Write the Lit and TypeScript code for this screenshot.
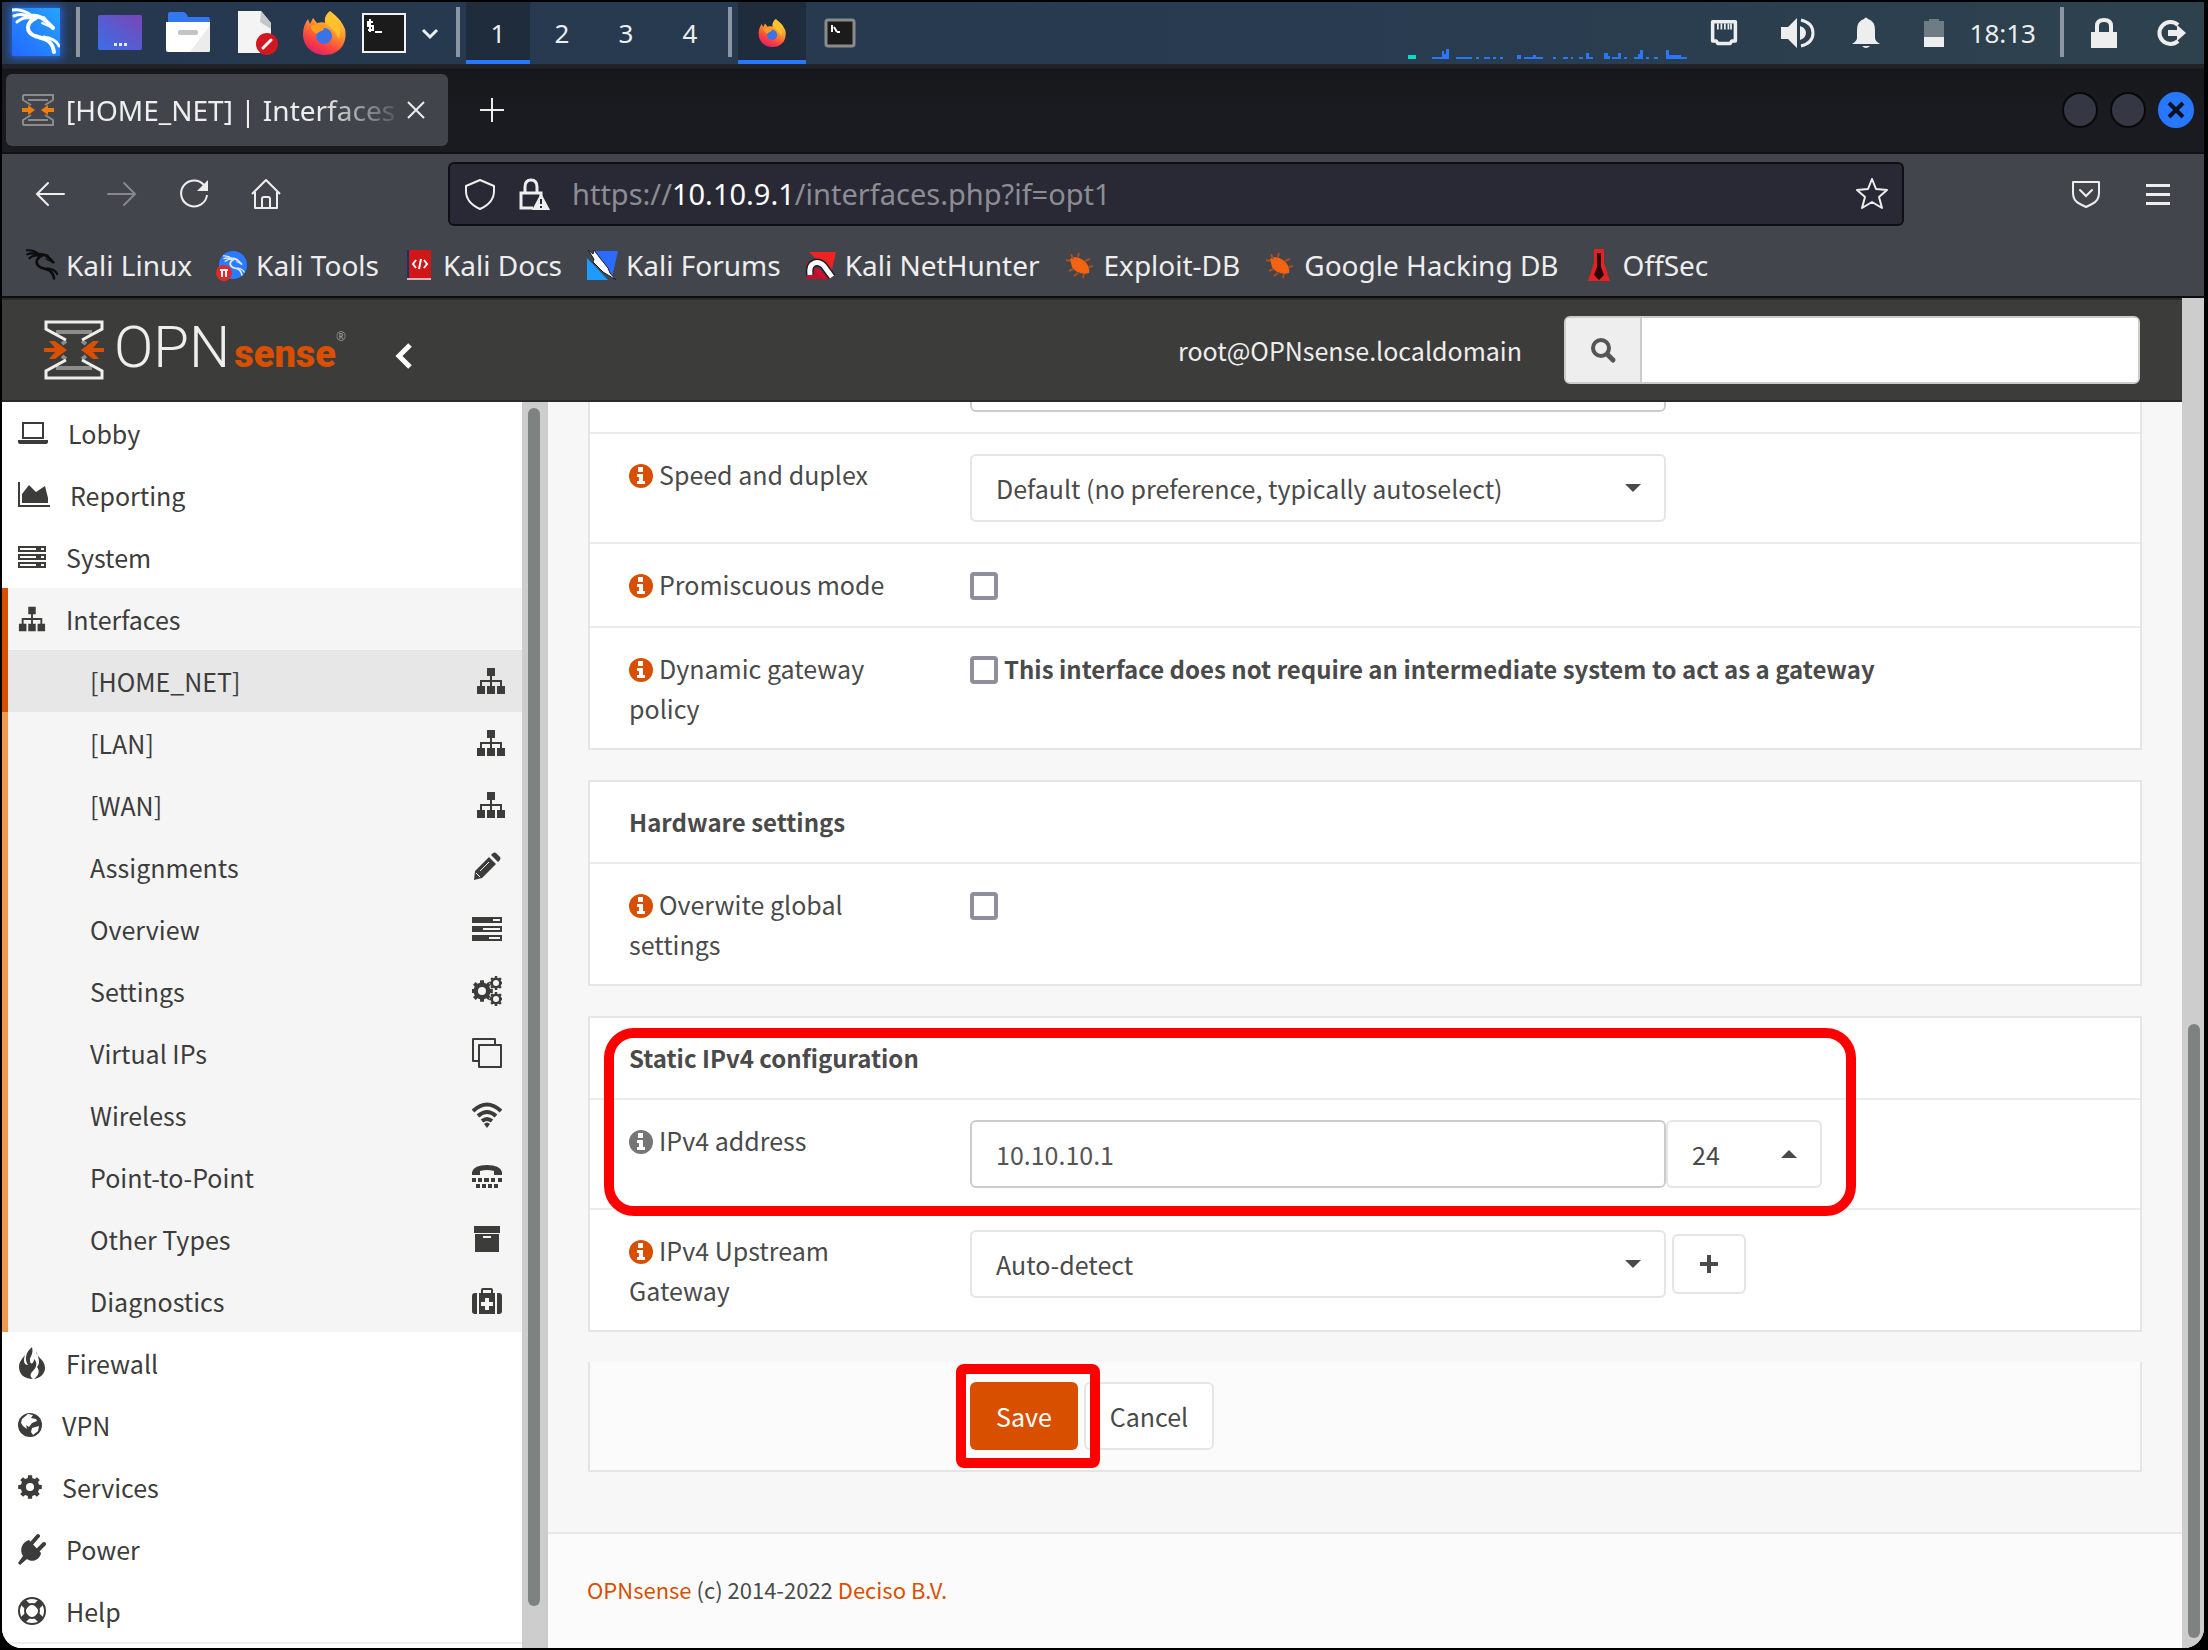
import { LitElement, html, svg, css, TemplateResult } from "lit";
import { customElement } from "lit/decorators.js";

/* ---------- icon drawings ---------- */

const gearPath = (cx: number, cy: number, r: number, hole: number, teeth = 8): string => {
  const pts: string[] = [];
  const step = (Math.PI * 2) / teeth;
  for (let i = 0; i < teeth; i++) {
    const a = i * step - Math.PI / 2;
    const spots: [number, number][] = [
      [a - step * 0.3, r * 0.78],
      [a - step * 0.22, r],
      [a + step * 0.22, r],
      [a + step * 0.3, r * 0.78],
    ];
    for (const [t, d] of spots) {
      pts.push(`${(cx + Math.cos(t) * d).toFixed(1)} ${(cy + Math.sin(t) * d).toFixed(1)}`);
    }
  }
  return `M${pts.join("L")}Z M${cx - hole} ${cy}a${hole} ${hole} 0 1 0 ${hole * 2} 0a${hole} ${hole} 0 1 0 ${-hole * 2} 0Z`;
};

const dragon = svg`
  <g fill="none" stroke="currentColor" stroke-linecap="round">
    <path stroke-width="3" d="M1 2C9 1 15 4 20 8M2 8C9 5 14 7 18 10M5 14C9 10 13 9 19 10"/>
    <path stroke-width="4" d="M18 8C28 6 33 12 41 20"/>
    <path stroke-width="2" d="M30 15L41 20M32 9L36 14"/>
    <path stroke-width="4" d="M24 10C13 15 14 24 23 28C32 31 40 31 42 44"/>
    <path stroke-width="3" d="M32 29C39 30 45 33 47 38"/>
  </g>`;

const firefox = svg`
  <defs>
    <linearGradient id="ff" x1="0.8" y1="0" x2="0.3" y2="1">
      <stop offset="0" stop-color="#ffe14a"/><stop offset="0.4" stop-color="#ff9a2e"/>
      <stop offset="0.75" stop-color="#ff4040"/><stop offset="1" stop-color="#d9206c"/>
    </linearGradient>
  </defs>
  <path fill="url(#ff)" d="M28 0C34 5 38 8 41 14L43 18C46 34 36 44 23 44C10 44 1 35 1 23C1 17 3 12 6 8L8 13L11 7L15 12C19 11 21 11 23 12C22 7 24 3 28 0Z"/>
  <path fill="#ffc12e" d="M28 1C36 9 40 15 37 28C33 20 29 16 24 13C22 8 24 4 28 1Z"/>
  <circle cx="22" cy="25" r="8" fill="#3a72e8"/>
  <path fill="#ff9d22" d="M9 15C14 13 18 14 22 18C20 21 16 20 15 23C12 22 9 19 9 15Z"/>`;

const sitemap = svg`
  <path fill="currentColor" d="M11 2h8v8h-8zM1 20h8v8h-8zM11 20h8v8h-8zM21 20h8v8h-8z"/>
  <path fill="none" stroke="currentColor" stroke-width="2" d="M15 9v12M5 21v-6h20v6"/>`;

const icons: Record<string, { box: string; art: TemplateResult | unknown }> = {
  dragon: { box: "0 0 48 48", art: dragon },
  firefox: { box: "0 0 44 44", art: firefox },
  desktop: {
    box: "0 0 44 44",
    art: svg`<defs><linearGradient id="dk" x1="0" x2="1" y1="1" y2="0"><stop offset="0" stop-color="#3a6fe8"/><stop offset="1" stop-color="#7a45b4"/></linearGradient></defs>
      <rect y="4" width="44" height="35" rx="2" fill="url(#dk)"/><path fill="#e8ecff" d="M16 32h3v3h-3zM21 32h3v3h-3zM26 32h3v3h-3z"/>`,
  },
  folder: {
    box: "0 0 44 44",
    art: svg`<path fill="#3577ee" d="M2 3q0-2 2-2h13q3 0 5 5h20q2 0 2 2v8H2z"/><path fill="#fff" d="M0 11h44v28q0 2-2 2H2q-2 0-2-2z"/>
      <path fill="#ececec" d="M44 14v25q0 2-2 2H24z"/><rect x="12" y="19" width="20" height="5" rx="2" fill="#c4c4c4"/>`,
  },
  file: {
    box: "0 0 44 44",
    art: svg`<path fill="#f4f4f4" d="M4 0h23l10 12v30H4z"/><path fill="#c6c6c6" d="M27 0l10 12v6L26 11z"/>
      <circle cx="33" cy="33" r="11" fill="#d11820"/><path stroke="#fff" stroke-width="3" stroke-linecap="round" d="M29 37l8-8"/>`,
  },
  terminal: {
    box: "0 0 44 44",
    art: svg`<rect x="1" y="3" width="42" height="38" fill="#1b1b1b" stroke="#f2f2f2" stroke-width="2"/>
      <path fill="none" stroke="#fff" stroke-width="2" d="M11 11H6v4h5v4H6M8 8v13M13 21h7"/>`,
  },
  terminalSmall: {
    box: "0 0 32 32",
    art: svg`<rect x="2" y="3" width="28" height="26" rx="2" fill="#1b1b1b" stroke="#8b8b8b" stroke-width="3"/>
      <path fill="none" stroke="#fff" stroke-width="2" d="M8 8v7M10 10l3 5M13 15h3"/>`,
  },
  chevronDown: { box: "0 0 20 20", art: svg`<path fill="none" stroke="#eee" stroke-width="3" d="M3 7l7 7 7-7"/>` },
  ethernet: {
    box: "0 0 32 32",
    art: svg`<path fill="none" stroke="#eee" stroke-width="4" stroke-linejoin="round" d="M3 3h26v22h-4l-2 3H9l-2-3H3z"/>
      <path stroke="#eee" stroke-width="2" d="M9 5v7M13 5v7M17 5v7M21 5v7M24 5v7"/>`,
  },
  speaker: {
    box: "0 0 36 32",
    art: svg`<path fill="#eee" d="M1 10h7l9-9v30l-9-9H1z"/><path fill="#eee" d="M20 9q6 2 6 7t-6 7z"/>
      <path fill="none" stroke="#eee" stroke-width="3" d="M21 3q12 3 12 13t-12 13"/>`,
  },
  bell: {
    box: "0 0 32 32",
    art: svg`<path fill="#eee" d="M14 2q2-3 4 0q7 2 7 11v8q0 3 5 6H2q5-3 5-6v-8q0-9 7-11zM12 29h8q-4 4-8 0z"/>`,
  },
  battery: { box: "0 0 20 32", art: svg`<path fill="#6f7c84" d="M5 2h10v2h5v16H0V4h5z"/><path fill="#eee" d="M0 20h20v10H0z"/>` },
  lockSolid: {
    box: "0 0 32 32",
    art: svg`<path fill="#eee" d="M3 15h26v16H3z"/><path fill="none" stroke="#eee" stroke-width="4" d="M9 16V9q0-6 7-6t7 6v7"/>`,
  },
  logout: {
    box: "0 0 32 32",
    art: svg`<path fill="none" stroke="#eee" stroke-width="4" d="M24 8a11 11 0 1 0 0 16"/><path fill="#eee" d="M14 13h9V8l9 8-9 8v-5h-9z"/>`,
  },
  back: { box: "0 0 32 32", art: svg`<path fill="none" stroke="currentColor" stroke-width="2" stroke-linecap="round" d="M30 16H3M14 5L3 16l11 11"/>` },
  forward: { box: "0 0 32 32", art: svg`<path fill="none" stroke="currentColor" stroke-width="2" stroke-linecap="round" d="M2 16h27M18 5l11 11-11 11"/>` },
  reload: {
    box: "0 0 32 32",
    art: svg`<path fill="none" stroke="currentColor" stroke-width="2" d="M26 7a13 13 0 1 0 3 10"/><path fill="currentColor" d="M30 2v11H19z"/>`,
  },
  home: {
    box: "0 0 32 32",
    art: svg`<path fill="none" stroke="currentColor" stroke-width="2" stroke-linejoin="round" d="M2 16L16 2l14 14M5 14v16h22V14M12 30v-9q0-2 2-2h4q2 0 2 2v9"/>`,
  },
  shield: {
    box: "0 0 32 32",
    art: svg`<path fill="none" stroke="currentColor" stroke-width="2" stroke-linejoin="round" d="M16 2l14 6v5c0 9-5 14-14 18C7 27 2 22 2 13V8z"/>`,
  },
  lockWarn: {
    box: "0 0 32 32",
    art: svg`<path fill="none" stroke="currentColor" stroke-width="3" d="M15 30H3V15h20v4M7 15V9q0-7 6-7t6 7v6"/>
      <path fill="currentColor" d="M23 15l9 17H14z"/><path stroke="#282934" stroke-width="2" d="M23 21v5M23 28v2"/>`,
  },
  star: {
    box: "0 0 32 32",
    art: svg`<path fill="none" stroke="currentColor" stroke-width="2" stroke-linejoin="round" d="M16 1l4 10 11 1-8 7 3 11-10-6-10 6 3-11-8-7 11-1z"/>`,
  },
  pocket: {
    box: "0 0 32 32",
    art: svg`<path fill="none" stroke="currentColor" stroke-width="2" stroke-linejoin="round" d="M3 4h26v11q0 8-7 11l-6 3-6-3q-7-3-7-11z"/>
      <path fill="none" stroke="currentColor" stroke-width="2" stroke-linecap="round" d="M10 12l6 6 6-6"/>`,
  },
  menu: { box: "0 0 32 32", art: svg`<path fill="currentColor" d="M4 6h24v3H4zM4 15h24v3H4zM4 24h24v3H4z"/>` },
  close: { box: "0 0 20 20", art: svg`<path fill="none" stroke="currentColor" stroke-width="2" d="M2 2l16 16M18 2L2 18"/>` },
  closeBold: { box: "0 0 20 20", art: svg`<path fill="none" stroke="#0b1020" stroke-width="4" d="M3 3l14 14M17 3L3 17"/>` },
  plusThin: { box: "0 0 28 28", art: svg`<path fill="none" stroke="currentColor" stroke-width="2" d="M14 2v24M2 14h24"/>` },
  hourglassTab: {
    box: "0 0 32 32",
    art: svg`<path fill="none" stroke="#8b8b8b" stroke-width="2" d="M1 1h30v5l-8 5M1 1v5l8 5M1 31h30v-5l-8-5M1 31v-5l8-5M6 6h20M6 26h20"/>
      <path fill="#f27c0c" d="M0 14h6v-3l7 5-7 5v-3H0zM32 14h-6v-3l-7 5 7 5v-3h6z"/>`,
  },
  hourglass: {
    box: "0 0 60 60",
    art: svg`<path fill="none" stroke="#8c8c8b" stroke-width="4" d="M12 12h36M12 48h36M22 21l-4 3M38 21l4 3M22 39l-4-3M38 39l4-3"/>
      <path fill="none" stroke="#eee" stroke-width="3" d="M22 20L2 9V2h56v7L38 20M22 40L2 51v7h56v-7L38 40"/>
      <path fill="#d94f00" d="M0 28h11l-6-7h6l12 9-12 9H5l6-7H0zM60 28H49l6-7h-6l-12 9 12 9h6l-6-7h11z"/>`,
  },
  tools: {
    box: "0 0 32 32",
    art: svg`<circle cx="17" cy="16" r="14" fill="#2b7bff"/><g color="#d7e8ff" transform="translate(7 6) scale(.45)">${dragon}</g>
      <circle cx="8" cy="24" r="8" fill="#e02a2a"/><path fill="none" stroke="#fff" stroke-width="2" d="M4 21h8M6 21v7M10 21v7"/>`,
  },
  docs: {
    box: "0 0 32 32",
    art: svg`<path fill="#17306b" d="M4 1h4v28H4z"/><path fill="#d01616" d="M6 1h22v28H6z"/><path fill="#d9b4b4" d="M4 29h24v2H4z"/>
      <path fill="none" stroke="#fff" stroke-width="2" d="M13 11l-3 4 3 4M21 11l3 4-3 4M18 10l-2 10"/>`,
  },
  forums: {
    box: "0 0 32 32",
    art: svg`<path fill="#1d9bff" d="M1 9l21 22H1z"/><path fill="#2b6bff" d="M9 2h23l-6 26z"/>
      <path fill="#fff" stroke="#16202e" stroke-width="1" d="M2 1l5 4 1-4 6 8 8 10 2 5 6 7-13-8L7 13l1-3z"/>`,
  },
  nethunter: {
    box: "0 0 32 32",
    art: svg`<path fill="#e22" d="M4 3h27l-5 22z"/><path fill="#c01030" d="M1 12v18h26z"/>
      <path fill="none" stroke="#16202e" stroke-width="8" d="M5 26C3 12 14 11 19 17L27 28"/>
      <path fill="none" stroke="#fff" stroke-width="5" d="M5 26C3 12 14 11 19 17L27 28"/><path stroke="#d01030" stroke-width="4" d="M12 20l8 10"/>`,
  },
  bug: {
    box: "0 0 32 32",
    art: svg`<path fill="#f26411" d="M6 10C10 7 15 8 19 11C24 15 26 19 25 24C18 26 11 23 8 18z"/>
      <path fill="none" stroke="#a8511c" stroke-width="2" d="M9 10L7 5M14 8l1-4M21 12l5-2M25 18l4-1M9 20l-4 2M14 24l-4 3M20 25l-1 4M6 12l-4-1"/>`,
  },
  offsec: {
    box: "0 0 32 32",
    art: svg`<path fill="#e52222" d="M11 0h10v14l6 18H5l6-18z"/><path fill="#2a0508" d="M14 4h4v14l3 8-5 5-5-5 3-8z"/>`,
  },
  chevronLeft: { box: "0 0 24 28", art: svg`<path fill="none" stroke="#fff" stroke-width="5" d="M18 3L7 14l11 11"/>` },
  search: {
    box: "0 0 28 28",
    art: svg`<circle cx="12" cy="12" r="8" fill="none" stroke="currentColor" stroke-width="4"/><path stroke="currentColor" stroke-width="5" stroke-linecap="round" d="M19 19l5 5"/>`,
  },
  info: {
    box: "0 0 24 24",
    art: svg`<circle cx="12" cy="12" r="12" fill="currentColor"/><path fill="#fff" d="M9 3h5v5H9zM8 10h6v7h2v3H8v-3h2v-4H8z"/>`,
  },
  caretDown: { box: "0 0 18 10", art: svg`<path fill="currentColor" d="M1 1h16L9 9z"/>` },
  caretUp: { box: "0 0 18 10", art: svg`<path fill="currentColor" d="M1 9h16L9 1z"/>` },
  plusBold: { box: "0 0 20 20", art: svg`<path fill="currentColor" d="M8 1h4v7h7v4h-7v7H8v-7H1V8h7z"/>` },
  laptop: {
    box: "0 0 30 28",
    art: svg`<path fill="none" stroke="currentColor" stroke-width="2" d="M5 4h20v15H5z"/><path fill="currentColor" d="M0 21h30v2q0 2-3 2H3q-3 0-3-2z"/>`,
  },
  chart: {
    box: "0 0 32 28",
    art: svg`<path fill="currentColor" d="M0 1h2v23h30v2H0zM4 13l7-9 7 7 3-2 6-4 3 12v5H4z"/>`,
  },
  server: {
    box: "0 0 28 28",
    art: svg`<path fill="currentColor" fill-rule="evenodd" d="M0 3h28v6H0zM2 5v2h16V5zM23 5v2h3V5zM0 11h28v6H0zM2 13v2h16v-2zM23 13v2h3v-2zM0 19h28v6H0zM2 21v2h16v-2zM23 21v2h3v-2z"/>`,
  },
  sitemap: { box: "0 0 30 30", art: sitemap },
  fire: {
    box: "0 0 28 32",
    art: svg`<path fill="currentColor" d="M14 0C16 8 11 10 12 14C12 18 16 17 16 12C21 17 17 22 14 25C12 27 12 30 15 32C6 32 1 27 1 20C1 15 4 12 7 8C5 14 6 18 10 18C6 12 8 5 14 0Z"/>
      <path fill="currentColor" d="M18 4C18 10 27 12 27 21C27 27 22 31 16 32C21 28 22 24 19 20C23 16 20 9 18 4Z"/>`,
  },
  globe: {
    box: "0 0 24 28",
    art: svg`<circle cx="12" cy="14" r="12" fill="currentColor"/>
      <path fill="#fff" d="M4 8L10 3L15 4L13 7L18 8L19 10L14 12L11 16L8 14L9 18L5 15L3 12ZM14 17L21 15L20 20L15 24L13 21Z"/>`,
  },
  cog: { box: "0 0 24 28", art: svg`<path fill="currentColor" fill-rule="evenodd" d="${gearPath(12, 14, 12, 4)}"/>` },
  cogs: {
    box: "0 0 30 30",
    art: svg`<path fill="currentColor" fill-rule="evenodd" d="${gearPath(10, 15, 11, 4)}${gearPath(24, 7, 7, 3)}${gearPath(24, 23, 7, 3)}"/>`,
  },
  plug: {
    box: "0 0 28 32",
    art: svg`<path fill="currentColor" d="M11 7L23 20C22 27 14 30 9 26L2 32L0 30L5 23C1 17 4 9 11 7Z"/>
      <path stroke="currentColor" stroke-width="4" stroke-linecap="round" d="M13 11l7-8M19 18l7-7"/>`,
  },
  ring: {
    box: "0 0 28 32",
    art: svg`<circle cx="14" cy="16" r="13" fill="none" stroke="currentColor" stroke-width="2"/><circle cx="14" cy="16" r="7" fill="none" stroke="currentColor" stroke-width="2"/>
      <path stroke="currentColor" stroke-width="7" d="M5 7l5 5M23 7l-5 5M5 25l5-5M23 25l-5-5"/>`,
  },
  pencil: {
    box: "0 0 30 30",
    art: svg`<path fill="currentColor" d="M3 19L17 5l7 7L10 26l-8 2zM19 3l2-2q2-1 3 0l4 4q1 1 0 3l-2 2z"/><path stroke="#f5f5f5" stroke-width="1" d="M8 19L17 10M4 21l4 4"/>`,
  },
  overview: {
    box: "0 0 30 30",
    art: svg`<path fill="currentColor" fill-rule="evenodd" d="M0 3h30v6H0zM21 5v2h7V5zM0 12h30v6H0zM11 14v2h17v-2zM0 21h30v6H0zM17 23v2h11v-2z"/>`,
  },
  copy: {
    box: "0 0 30 30",
    art: svg`<path fill="none" stroke="currentColor" stroke-width="2" stroke-linejoin="round" d="M7 7h22v22H7zM6 23H1V1h22v5"/>`,
  },
  wifi: {
    box: "0 0 30 30",
    art: svg`<path fill="none" stroke="currentColor" stroke-width="4" d="M1 11Q15-2 29 11M6 16q9-8 18 0M10 21q5-4 10 0"/><path fill="currentColor" d="M12 24q3-3 6 0l-3 4z"/>`,
  },
  tty: {
    box: "0 0 30 30",
    art: svg`<path fill="currentColor" d="M0 10Q2 3 15 3T30 10v3h-8V9Q15 7 8 9v4H0zM0 16h4v4H0zM6 16h4v4H6zM12 16h5v4h-5zM19 16h4v4h-4zM26 16h4v4h-4zM4 22h4v4H4zM10 22h4v4h-4zM16 22h4v4h-4zM22 22h4v4h-4z"/>`,
  },
  archive: {
    box: "0 0 30 30",
    art: svg`<path fill="currentColor" fill-rule="evenodd" d="M2 2h26v7H2zM3 10h24v18H3zM11 12v2h8v-2z"/>`,
  },
  medkit: {
    box: "0 0 30 30",
    art: svg`<path fill="currentColor" fill-rule="evenodd" d="M9 7V4q0-2 2-2h8q2 0 2 2v3h2v21H7V7zM11 7h8V4h-8zM13 12v4H9v4h4v4h4v-4h4v-4h-4v-4zM5 7v21H3q-3 0-3-3V10q0-3 3-3zM25 7v21h2q3 0 3-3V10q0-3-3-3z"/>`,
  },
};

const icon = (name: string, cls: string) =>
  html`<svg class="icon ${cls}" viewBox=${icons[name].box} aria-hidden="true">${icons[name].art}</svg>`;

const iconStyles = css`
  .icon { display: block; flex: none; }
  .s18 { width: 18px; height: 10px; }
  .s20 { width: 20px; height: 20px; }
  .s24 { width: 24px; height: 28px; }
  .s28 { width: 28px; height: 28px; }
  .tall { width: 28px; height: 32px; }
  .s30 { width: 30px; height: 30px; }
  .s32 { width: 32px; height: 32px; }
  .s44 { width: 44px; height: 44px; }
  .s48 { width: 48px; height: 48px; }
  .s60 { width: 60px; height: 60px; }
  .narrow { width: 20px; height: 32px; }
  .wide { width: 36px; height: 32px; }
  button { font: inherit; color: inherit; background: none; border: 0; padding: 0; margin: 0; display: grid; place-items: center; }
  a { color: inherit; text-decoration: none; }
  * { box-sizing: border-box; }
`;

/* ---------- desktop panel ---------- */

@customElement("desktop-panel")
export class DesktopPanel extends LitElement {
  static styles = [iconStyles, css`
    :host { display: flex; align-items: center; height: 62px; padding: 0 18px 0 10px; color: #eee;
      font: 26px/36px "Noto Sans", sans-serif; background: linear-gradient(90deg, #25384f, #283b50 60%, #2e424e); }
    .kali { width: 48px; height: 48px; color: #fff; background: linear-gradient(45deg, #2468ff, #24a4ff); box-shadow: 0 0 8px 2px #2a62d8; margin-bottom: 2px; }
    .sep { width: 4px; height: 50px; background: #8c96a2; margin: 0 0 2px 16px; }
    .spaces + .sep { margin-left: 6px; }
    .launchers { display: flex; align-items: center; gap: 24px; padding-left: 18px; }
    .launchers .term { margin-left: -8px; }
    .launchers .more { margin-left: -10px; }
    .spaces { display: flex; align-self: stretch; margin-left: 6px; }
    .space { width: 64px; }
    .task { width: 68px; }
    .space.on, .task.on { background: #1f2c3b; box-shadow: inset 0 -4px #2777ff; }
    .tail { margin-left: auto; display: flex; align-items: center; gap: 34px; }
    .graph { align-self: flex-end; width: 280px; height: 12px; margin-right: -12px; }
    .tail .wide, .tail .narrow { margin-left: 8px; }
    .clock { margin: 0 -10px 0 -8px; }
    .tail .sep { margin: 0 -10px 2px 0; }
  `];

  render() {
    return html`
      <button class="kali" aria-label="Applications">${icon("dragon", "s48")}</button>
      <span class="sep"></span>
      <div class="launchers">
        <button aria-label="Show desktop">${icon("desktop", "s44")}</button>
        <button aria-label="Files">${icon("folder", "s44")}</button>
        <button aria-label="Text editor">${icon("file", "s44")}</button>
        <button aria-label="Firefox">${icon("firefox", "s44")}</button>
        <button class="term" aria-label="Terminal">${icon("terminal", "s44")}</button>
        <button class="more" aria-label="More terminals">${icon("chevronDown", "s20")}</button>
      </div>
      <span class="sep"></span>
      <div class="spaces">
        ${[1, 2, 3, 4].map((n) => html`<button class="space ${n === 1 ? "on" : ""}">${n}</button>`)}
      </div>
      <span class="sep"></span>
      <div class="spaces">
        <button class="task on" aria-label="Firefox window">${icon("firefox", "s28")}</button>
        <button class="task" aria-label="Terminal window">${icon("terminalSmall", "s32")}</button>
      </div>
      <div class="tail">
        <svg class="graph" viewBox="0 0 280 12" aria-hidden="true">
          <path fill="#00e0c8" d="M0 8h8v4H0z"/>
          <path fill="#2777ff" d="M24 10h10V4h2v3h2V2h3v10H24zM48 10h16v2H48zM68 10h3v2h-3zM76 10h6v2h-6zM85 10h3v2h-3zM92 10h3v2h-3zM109 8h4v4h-4zM116 10h9V8h3v2h7v2h-19zM145 10h3v2h-3zM155 10h5v2h-5zM163 10h2v2h-2zM171 10h4v2h-4zM178 6h3v4h4v2h-7zM196 6h4v3h2v3h-6zM204 10h6V6h3v6h-9zM216 10h3v2h-3zM226 10h4V7h2V3h3v9h-9zM238 10h3v2h-3zM246 10h4v2h-4zM258 3h3v5h12v2h6v2h-21z"/>
        </svg>
        ${icon("ethernet", "s28")} ${icon("speaker", "wide")} ${icon("bell", "s32")} ${icon("battery", "narrow")}
        <time class="clock">18:13</time>
        <span class="sep"></span>
        <button aria-label="Lock screen">${icon("lockSolid", "s32")}</button>
        <button aria-label="Log out">${icon("logout", "s32")}</button>
      </div>`;
  }
}

/* ---------- browser chrome ---------- */

@customElement("browser-chrome")
export class BrowserChrome extends LitElement {
  static styles = [iconStyles, css`
    :host { display: block; color: #eee; font: 28px/40px "Noto Sans", sans-serif; }
    .tabs { display: flex; align-items: center; height: 90px; padding: 4px 10px 0 4px; background: linear-gradient(#1f2328 4px, #15171b 5px, #1a1b20 50%);
      border-bottom: 2px solid #101114; }
    .tab { display: flex; align-items: center; gap: 12px; width: 442px; height: 72px; padding: 0 22px 0 16px; border-radius: 6px; background: #42444b; }
    .title { flex: 1; min-width: 0; overflow: hidden; white-space: nowrap; text-align: left;
      -webkit-mask-image: linear-gradient(90deg, #000 75%, transparent); mask-image: linear-gradient(90deg, #000 75%, transparent); }
    .tab .x { margin-left: -12px; }
    .add { margin-left: 30px; }
    .window { display: flex; gap: 12px; margin-left: auto; }
    .window button { width: 36px; height: 36px; border-radius: 50%; background: #353744; border: 2px solid #08090b; }
    .window .quit { background: #2777ff; border-color: #2777ff; }
    .nav { display: flex; align-items: center; height: 80px; background: #43454c; padding: 0 30px 0 32px; }
    .nav .off { color: #86888d; }
    .moves { display: flex; gap: 40px; }
    .address { display: flex; align-items: center; gap: 22px; height: 64px; flex: 0 1 1456px; margin: 0 auto 0 166px; padding: 0 14px;
      background: #282934; border: 2px solid #0e0f13; border-radius: 6px; color: #eee; }
    .url { flex: 1; color: #8c8d94; white-space: nowrap; font-size: 29px; }
    .url b { color: #fff; font-weight: 400; }
    .end { display: flex; gap: 40px; }
    .marks { display: flex; align-items: center; gap: 24px; height: 64px; padding: 0 24px; background: #43454c; border-bottom: 2px solid #0c0d0f; }
    .marks a { display: flex; align-items: center; gap: 8px; white-space: nowrap; }
    .dark { color: #0c0c0c; }
  `];

  private marks: [string, string][] = [
    ["dragon", "Kali Linux"], ["tools", "Kali Tools"], ["docs", "Kali Docs"], ["forums", "Kali Forums"],
    ["nethunter", "Kali NetHunter"], ["bug", "Exploit-DB"], ["bug", "Google Hacking DB"], ["offsec", "OffSec"],
  ];

  render() {
    return html`
      <div class="tabs">
        <div class="tab">
          ${icon("hourglassTab", "s32")}
          <span class="title">[HOME_NET] | Interfaces |</span>
          <button class="x" aria-label="Close tab">${icon("close", "s20")}</button>
        </div>
        <button class="add" aria-label="New tab">${icon("plusThin", "s28")}</button>
        <div class="window">
          <button aria-label="Minimize"></button>
          <button aria-label="Maximize"></button>
          <button class="quit" aria-label="Close window">${icon("closeBold", "s20")}</button>
        </div>
      </div>
      <div class="nav">
        <div class="moves">
          <button aria-label="Back">${icon("back", "s32")}</button>
          <button class="off" aria-label="Forward">${icon("forward", "s32")}</button>
          <button aria-label="Reload">${icon("reload", "s32")}</button>
          <button aria-label="Home">${icon("home", "s32")}</button>
        </div>
        <div class="address">
          ${icon("shield", "s32")} ${icon("lockWarn", "s32")}
          <div class="url" role="textbox" aria-label="Address">https://<b>10.10.9.1</b>/interfaces.php?if=opt1</div>
          <button aria-label="Bookmark this page">${icon("star", "s32")}</button>
        </div>
        <div class="end">
          <button aria-label="Save to Pocket">${icon("pocket", "s32")}</button>
          <button aria-label="Menu">${icon("menu", "s32")}</button>
        </div>
      </div>
      <nav class="marks">
        ${this.marks.map(([i, text]) => html`<a href="#">${icon(i, i === "dragon" ? "s32 dark" : "s32")}${text}</a>`)}
      </nav>`;
  }
}

/* ---------- sidebar ---------- */

interface Entry { icon: string; size: string; text: string; }

const top: Entry[] = [
  { icon: "laptop", size: "s30", text: "Lobby" },
  { icon: "chart", size: "s32", text: "Reporting" },
  { icon: "server", size: "s28", text: "System" },
];
const sub: [string, string][] = [
  ["sitemap", "[HOME_NET]"], ["sitemap", "[LAN]"], ["sitemap", "[WAN]"], ["pencil", "Assignments"], ["overview", "Overview"],
  ["cogs", "Settings"], ["copy", "Virtual IPs"], ["wifi", "Wireless"], ["tty", "Point-to-Point"], ["archive", "Other Types"],
  ["medkit", "Diagnostics"],
];
const rest: Entry[] = [
  { icon: "fire", size: "tall", text: "Firewall" },
  { icon: "globe", size: "s24", text: "VPN" },
  { icon: "cog", size: "s24", text: "Services" },
  { icon: "plug", size: "tall", text: "Power" },
  { icon: "ring", size: "tall", text: "Help" },
];

@customElement("side-menu")
export class SideMenu extends LitElement {
  static styles = [iconStyles, css`
    :host { display: flex; background: #fff; color: #3c3c3b; }
    nav { flex: 1; }
    .row { display: flex; align-items: center; gap: 20px; height: 62px; padding-left: 16px; }
    .group { background: #f5f5f5; }
    .group .row { padding-left: 10px; border-left: 6px solid #d94f00; }
    .group .sub { justify-content: space-between; padding: 0 20px 0 82px; border-color: #f09a50; }
    .group .port { padding-right: 16px; }
    .group .here { background: #e7e7e7; border-color: #d94f00; }
    .end { border-top: 2px solid #eee; }
    .track { width: 26px; padding: 6px 8px 42px 6px; background: #cdcdcd; }
    .thumb { height: 100%; border-radius: 6px; background: #7e8382; }
  `];

  private row = (e: Entry) => html`<a class="row" href="#">${icon(e.icon, e.size)}<span>${e.text}</span></a>`;

  render() {
    return html`
      <nav>
        ${top.map(this.row)}
        <div class="group">
          ${this.row({ icon: "sitemap", size: "s28", text: "Interfaces" })}
          ${sub.map(([i, text], n) => html`
            <a class="row sub ${i === "sitemap" ? "port" : ""} ${n === 0 ? "here" : ""}" href="#"><span>${text}</span>${icon(i, "s30")}</a>`)}
        </div>
        ${rest.map(this.row)}
        <div class="end"></div>
      </nav>
      <div class="track"><div class="thumb"></div></div>`;
  }
}

/* ---------- interface settings form ---------- */

@customElement("interface-form")
export class InterfaceForm extends LitElement {
  static styles = [iconStyles, css`
    :host { display: flex; flex-direction: column; overflow: hidden; background: #f7f7f7; color: #4a4a4a; }
    form { display: flex; flex-direction: column; gap: 30px; margin: -80px 40px 60px; }
    .card { position: relative; background: #fff; border: 2px solid #e5e5e5; }
    .row { display: grid; grid-template-columns: 22% 1fr; }
    .row + .row { border-top: 2px solid #ececec; }
    .row > * { padding: 20px 39px; }
    h2 { font: inherit; font-size: 24px; font-weight: 700; margin: 0; grid-column: 1 / -1; }
    .name .icon { display: inline-block; vertical-align: -3px; margin-right: 6px; color: #d94f00; }
    .name .plain { color: #757575; }
    .s25 { width: 24px; height: 24px; }
    .field { display: flex; align-items: flex-start; }
    .field.spread { gap: 6px; }
    .check { display: flex; gap: 6px; font-size: 24px; font-weight: 700; line-height: 42px; min-height: 82px; }
    .tick { appearance: none; flex: none; width: 28px; height: 28px; margin: 8px 0 0; background: #fff; border: 4px solid #8f8f9d; border-radius: 4px; }
    .pick { position: relative; flex: 0 1 696px; }
    .pick.small { flex-basis: 156px; }
    .pick .icon { position: absolute; right: 24px; top: 29px; pointer-events: none; }
    select, .text { appearance: none; display: block; width: 100%; height: 68px; margin: 0; padding: 0 24px; font: inherit; color: inherit;
      background: #fff; border: 2px solid #e5e5e5; border-radius: 6px; }
    .text { flex: 0 1 696px; border-color: #ccc; color: #555; }
    .plus { width: 74px; height: 60px; margin-top: 4px; border: 2px solid #e5e5e5; border-radius: 6px; }
    .actions { background: #fbfbfb; border-top: 0; }
    .btn { height: 68px; padding: 0 26px; border-radius: 6px; }
    .save { background: #d94f00; color: #fff; }
    .cancel { padding: 0 24px; background: #fff; border: 2px solid #e5e5e5; }
    .mark { position: absolute; border: 10px solid #f00; pointer-events: none; }
    .mark-wide { left: 14px; top: 10px; width: 1252px; height: 188px; border-radius: 30px; }
    .marked { position: relative; }
    .mark-save { left: -14px; top: -18px; width: 144px; height: 104px; border-radius: 8px; z-index: 1; }
    footer { flex: 1; border-top: 2px solid #e8e8e8; background: #fbfbfb; padding: 38px 39px; font-size: 22px; line-height: 34px; }
    footer a { color: #d94f00; }
  `];

  private name = (text: string, id: string, plain = false) =>
    html`<label class="name" for=${id}>${icon("info", plain ? "s25 plain" : "s25")}${text}</label>`;

  render() {
    return html`
      <form @submit=${(e: Event) => e.preventDefault()}>
        <section class="card">
          <div class="row">
            <span></span>
            <div class="field"><input class="text" aria-label="MSS"></div>
          </div>
          <div class="row">
            ${this.name("Speed and duplex", "speed")}
            <div class="field">
              <div class="pick"><select id="speed"><option>Default (no preference, typically autoselect)</option></select>${icon("caretDown", "s18")}</div>
            </div>
          </div>
          <div class="row">
            ${this.name("Promiscuous mode", "promisc")}
            <div class="check"><input class="tick" type="checkbox" id="promisc"></div>
          </div>
          <div class="row">
            ${this.name("Dynamic gateway policy", "dynamic")}
            <div class="check">
              <input class="tick" type="checkbox" id="dynamic">
              <label for="dynamic">This interface does not require an intermediate system to act as a gateway</label>
            </div>
          </div>
        </section>

        <section class="card">
          <div class="row"><h2>Hardware settings</h2></div>
          <div class="row">
            ${this.name("Overwite global settings", "overwrite")}
            <div class="check"><input class="tick" type="checkbox" id="overwrite"></div>
          </div>
        </section>

        <section class="card">
          <div class="row"><h2>Static IPv4 configuration</h2></div>
          <div class="row">
            ${this.name("IPv4 address", "address", true)}
            <div class="field">
              <input class="text" id="address" value="10.10.10.1">
              <div class="pick small"><select aria-label="Subnet"><option>24</option></select>${icon("caretUp", "s18")}</div>
            </div>
          </div>
          <div class="row">
            ${this.name("IPv4 Upstream Gateway", "gateway")}
            <div class="field spread">
              <div class="pick"><select id="gateway"><option>Auto-detect</option></select>${icon("caretDown", "s18")}</div>
              <button class="plus" type="button" aria-label="Add gateway">${icon("plusBold", "s20")}</button>
            </div>
          </div>
          <div class="mark mark-wide"></div>
        </section>

        <section class="card actions">
          <div class="row">
            <span></span>
            <div class="field spread">
              <div class="marked"><button class="btn save">Save</button><div class="mark mark-save"></div></div>
              <button class="btn cancel" type="button">Cancel</button>
            </div>
          </div>
        </section>
      </form>
      <footer><a href="#">OPNsense</a> (c) 2014-2022 <a href="#">Deciso B.V.</a></footer>`;
  }
}

/* ---------- page ---------- */

@customElement("app-root")
export class AppRoot extends LitElement {
  static styles = [iconStyles, css`
    :host { display: flex; flex-direction: column; box-sizing: border-box; min-height: 100vh; background: #000; padding: 2px 4px 2px 2px; overflow: hidden; }
    .page { flex: 1; display: flex; min-height: 0; background: #f7f7f7; border-radius: 0 0 20px 20px; overflow: hidden;
      font: 25px/40px "Noto Sans CJK JP", "Noto Sans", sans-serif; }
    .view { flex: 1; min-width: 0; display: flex; flex-direction: column; }
    header { display: flex; align-items: center; height: 104px; padding: 0 42px; background: #3c3c3a; border: solid #2a2a2a; border-width: 2px 0; color: #eee; }
    .brand { display: flex; align-items: center; gap: 10px; }
    .word { display: flex; align-items: baseline; font: 300 58px/60px Roboto, "Liberation Sans", sans-serif; }
    .word b { color: #d94f00; font-size: 38px; font-weight: 900; margin-left: 4px; }
    .word sup { align-self: flex-start; font: 12px/40px "Noto Sans", sans-serif; color: #999; }
    .fold { margin: 12px auto 0 46px; }
    .search { display: flex; width: 576px; height: 68px; margin-left: 42px; border: 2px solid #ccc; border-radius: 6px; overflow: hidden; background: #fff; }
    .search button { width: 76px; background: #eee; color: #555; border-right: 2px solid #ccc; }
    .search input { flex: 1; min-width: 0; border: 0; font: inherit; padding: 0 24px; background: #fff; }
    .body { flex: 1; display: grid; grid-template-columns: 546px 1fr; }
    .scroll { width: 22px; background: #cdcdcd; display: flex; flex-direction: column; justify-content: flex-end; padding: 6px 4px 10px 6px; }
    .thumb { height: 46%; border-radius: 6px; background: #7e8382; }
  `];

  render() {
    return html`
      <desktop-panel></desktop-panel>
      <browser-chrome></browser-chrome>
      <div class="page">
        <div class="view">
          <header>
            <a class="brand" href="#">${icon("hourglass", "s60")}<span class="word">OPN<b>sense</b><sup>®</sup></span></a>
            <button class="fold" aria-label="Collapse menu">${icon("chevronLeft", "s24")}</button>
            <span>root@OPNsense.localdomain</span>
            <div class="search">
              <button aria-label="Search">${icon("search", "s28")}</button>
              <input type="text" aria-label="Search">
            </div>
          </header>
          <div class="body">
            <side-menu></side-menu>
            <interface-form></interface-form>
          </div>
        </div>
        <div class="scroll"><div class="thumb"></div></div>
      </div>`;
  }
}
